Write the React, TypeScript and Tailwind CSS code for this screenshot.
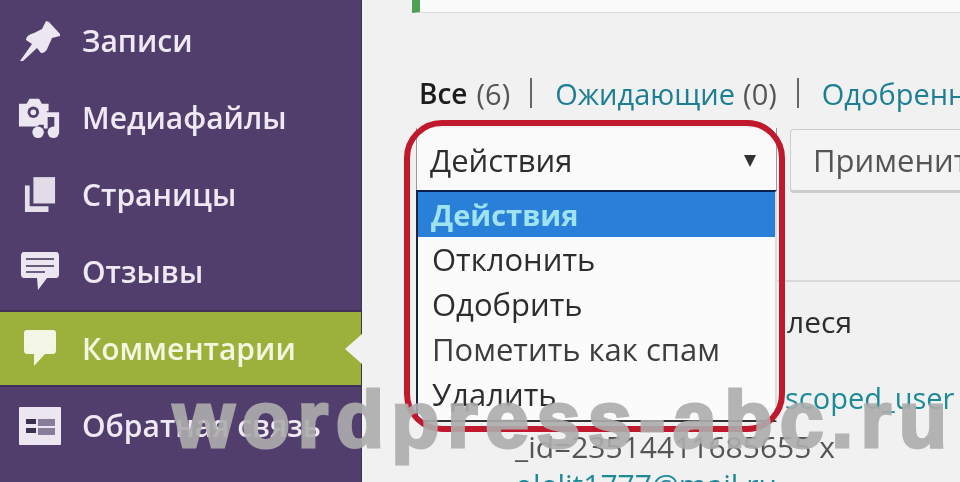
const PinIcon = () => (
  <svg viewBox="0 0 42 42" className="w-[42px] h-[42px]" fill="#ece6f1">
    <path d="M1 41 L13 24 L7 20 Q7 15 15 13 L23 9 L27 1 L30 2 L41 14 L41 16 L33 18 L29 27 Q27 33 22 33 L18 28 L4 41 Z" />
  </svg>
);
const MediaIcon = () => (
  <svg viewBox="0 0 46 46" className="w-[44px] h-[44px]" fill="#ece6f1">
    <path d="M1 8 H9 L12 3 H22 L25 8 H32 V16 H30 V30 H22 L20 32 H1 Z" />
    <circle cx="16" cy="17" r="6" fill="#523f6d" />
    <circle cx="16" cy="17" r="3" />
    <path d="M27 17 H43 V37 H38 V22 H31 V34 H27 Z" />
    <circle cx="21" cy="38" r="6" />
    <circle cx="37" cy="38" r="6" />
  </svg>
);
const PagesIcon = () => (
  <svg viewBox="0 0 34 40" className="w-[32px] h-[38px]">
    <path d="M1 10 H6 V32 H26 V38 H1 Z" fill="#e6dfec" />
    <rect x="10" y="1" width="23" height="28" fill="#e2dce8" />
  </svg>
);
const ReviewIcon = () => (
  <svg viewBox="0 0 40 40" className="w-[40px] h-[40px]">
    <path d="M4 0 H36 Q39 0 39 4 V22 Q39 26 36 26 H27 L18 38 L17 26 H4 Q1 26 1 22 V4 Q1 0 4 0 Z" fill="#ece6f1" />
    <path d="M6 7 H34 M6 14 H34" stroke="#3c3050" strokeWidth="1.6" />
    <path d="M6 20 H25" stroke="#6d5f82" strokeWidth="2" />
  </svg>
);
const CommentIcon = () => (
  <svg viewBox="0 0 32 37" className="w-[32px] h-[37px]">
    <path d="M3 0 H29 Q32 0 32 3 V20 Q32 24 29 24 H21 L10 36 L10 24 H3 Q0 24 0 20 V3 Q0 0 3 0 Z" fill="#f3f6e4" />
  </svg>
);
const FormIcon = () => (
  <svg viewBox="0 0 42 38" className="w-[42px] h-[38px]">
    <rect x="0" y="0" width="42" height="38" rx="1" fill="#ece6f1" />
    <rect x="7" y="12" width="10" height="5" fill="#3c3050" />
    <rect x="7" y="21" width="10" height="5" fill="#3c3050" />
    <rect x="19" y="12" width="17" height="7" fill="#8a7d9c" />
    <rect x="19" y="21" width="17" height="7" fill="#8a7d9c" />
  </svg>
);

const items = [
  { label: "Записи", icon: <PinIcon /> },
  { label: "Медиафайлы", icon: <MediaIcon /> },
  { label: "Страницы", icon: <PagesIcon /> },
  { label: "Отзывы", icon: <ReviewIcon /> },
  { label: "Комментарии", icon: <CommentIcon />, active: true },
  { label: "Обратная связь", icon: <FormIcon /> },
];

export default function App() {
  return (
    <div className="relative flex w-[960px] h-[482px] overflow-hidden bg-[#f1f1f1] font-['Open_Sans',sans-serif] text-[30px] leading-none blur-[0.5px]">
      <aside className="w-[362px] shrink-0 bg-[#513e6d] pt-[2px] border-r border-[#3f3058] whitespace-nowrap">
        {items.map((it) =>
          it.active ? (
            <div
              key={it.label}
              className="relative flex items-center h-[77px] bg-[#9bb13b] border-y-2 border-[#3f3058] text-[#f3f6e0] font-semibold"
            >
              <div className="w-[80px] mr-[2px] flex justify-center shrink-0">{it.icon}</div>
              <span>{it.label}</span>
              <div className="absolute right-[-1px] top-[22px] w-0 h-0 border-y-[15px] border-y-transparent border-r-[17px] border-r-[#f1f1f1]" />
            </div>
          ) : (
            <div key={it.label} className="flex items-center h-[77px] text-[#efe9f3] font-semibold">
              <div className="w-[80px] mr-[2px] flex justify-center shrink-0">{it.icon}</div>
              <span>{it.label}</span>
            </div>
          )
        )}
      </aside>

      <main className="flex-1 min-w-0 overflow-hidden">
        <div className="ml-[50px] h-[13px] bg-[#fafafa] border-l-[8px] border-l-[#4f9f55] border-b border-b-[#dcdcdc]" />

        <div className="ml-[57px] mt-[65px] h-[30px] flex items-center whitespace-nowrap text-[29px] text-[#555]">
          <span className="shrink-0 font-semibold text-[#1c1c1c] text-[28px]">Все</span>
          <span className="shrink-0 ml-[9px]">(6)</span>
          <span className="shrink-0 ml-[20px] mr-[23px] w-[2px] h-[30px] bg-[#666]" />
          <span className="shrink-0 text-[#1d7f93]">Ожидающие</span>
          <span className="shrink-0 ml-[8px]">(0)</span>
          <span className="shrink-0 ml-[20px] mr-[23px] w-[2px] h-[30px] bg-[#666]" />
          <span className="shrink-0 text-[#1d7f93]">Одобренные</span>
        </div>

        <div className="flex mt-[20px] ml-[54px]">
          <div className="w-[361px] shrink-0 pb-[8px]">
            <div className="h-[62px] pt-[3px] flex items-center justify-between pl-[13px] pr-[20px] bg-[#fafafa] text-[#2d2d2d] border-x border-[#999]">
              <span className="text-[31px]">Действия</span>
              <span className="w-0 h-0 border-x-[6px] border-x-transparent border-t-[12px] border-t-[#333]" />
            </div>
            <div className="h-[232px] bg-[#fbfbfb] border-2 border-l-[#1a2340] border-r-[#ddd] border-t-[#0a2050] border-b-[#333] text-[31px]">
              <div className="h-[45px] pl-[13px] flex items-center bg-[#2a80d8] text-[#9fe3f3] font-bold text-[29px]">Действия</div>
              <div className="h-[45px] pl-[14px] flex items-center text-[#2d2d2d]">Отклонить</div>
              <div className="h-[45px] pl-[14px] flex items-center text-[#2d2d2d]">Одобрить</div>
              <div className="h-[45px] pl-[14px] flex items-center text-[#3d3d3d]">Пометить как спам</div>
              <div className="h-[44px] pl-[14px] flex items-center text-[#2d2d2d]">Удалить</div>
            </div>
          </div>

          <div className="ml-[13px] flex-1 min-w-0 whitespace-nowrap">
            <div className="-mr-[20px] h-[64px] mt-[1px] pl-[22px] flex items-center bg-[#f4f4f4] border border-[#ccc] rounded-[4px] border-b-[3px] text-[#555] text-[31px] overflow-hidden">
              Применить
            </div>
            <div className="mt-[87px] -ml-[13px] border-t-2 border-[#d9d9d9]" />
            <div className="mt-[25px] -ml-[3px] text-[#2d2d2d]">леся</div>
            <div className="mt-[46px] -ml-[5px] text-[29px] text-[#1d8a98]">scoped_user</div>
          </div>
        </div>

        <div className="ml-[153px] mt-[2px] whitespace-nowrap">
          <div className="text-[#555]">_id=23514411685655 x</div>
          <div className="mt-[8px] text-[#1d8a98]">olelit1777@mail.ru</div>
        </div>
      </main>

      <div className="absolute left-[404px] top-[120px] w-[381px] h-[312px] border-[6px] border-[#c0182c] rounded-[38px]" />
      <div className="absolute left-[173px] top-[375px] text-[#adadad] opacity-90 font-['Liberation_Sans',sans-serif] font-bold text-[79px] leading-[90px] tracking-[7.4px] [-webkit-text-stroke:3px_#adadad] whitespace-nowrap">
        wordpress-abc.ru
      </div>
    </div>
  );
}
